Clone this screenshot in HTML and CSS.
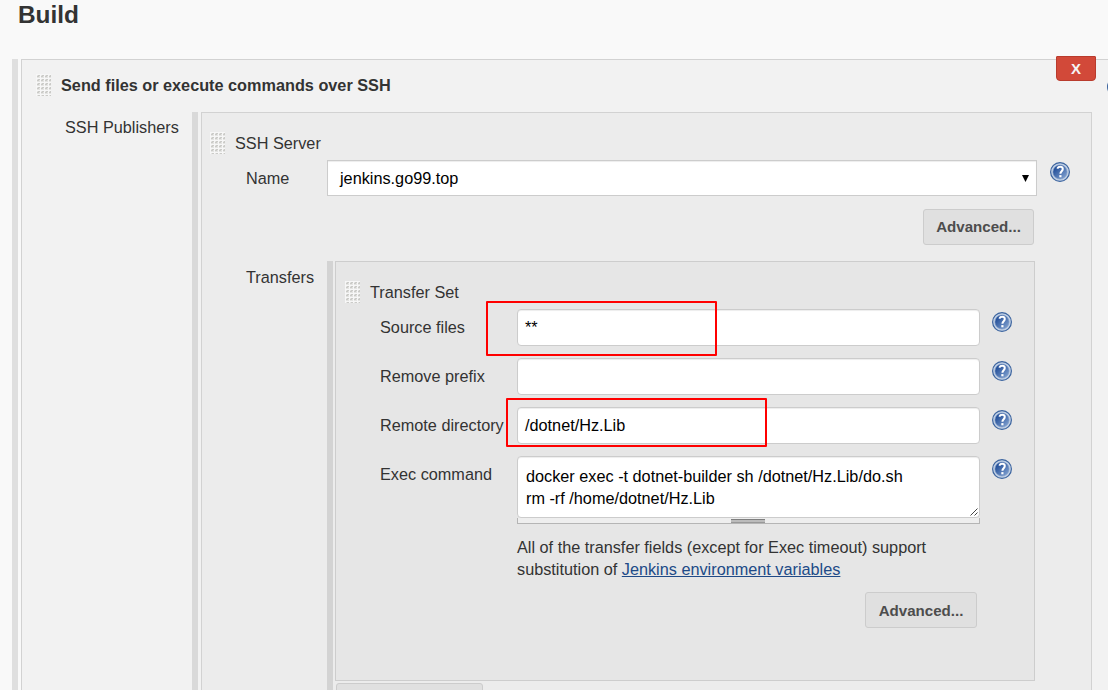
FILE: index.html
```html
<!DOCTYPE html>
<html lang="en">
<head>
<meta charset="utf-8">
<title>Build</title>
<link rel="stylesheet" href="styles.css">
</head>
<body>
<svg class="defs" aria-hidden="true">
  <defs>
    <linearGradient id="blue" x1="0" y1="0" x2="1" y2="1">
      <stop offset="0.2" stop-color="#24509a"/>
      <stop offset="0.9" stop-color="#7f9fce"/>
    </linearGradient>
    <symbol id="help" viewBox="0 0 20 20">
      <circle cx="10" cy="10" r="9.4" fill="#c3d2e6" stroke="#3c649f" stroke-width="1.2"/>
      <circle cx="10" cy="10" r="7.1" fill="url(#blue)" stroke="#7f9bc4" stroke-width=".6"/>
      <path d="M7.3 6.6C7.9 5.3 8.8 4.8 10.1 4.8c1.7 0 2.7.9 2.7 2.3 0 2-2.4 2.2-2.4 4.6" fill="none" stroke="#fff" stroke-width="2"/>
      <path d="M9.3 13.1h2.2v2.2H9.3z" fill="#fff"/>
    </symbol>
    <pattern id="dots" width="4" height="4" patternUnits="userSpaceOnUse">
      <path d="M0 0h4v4H0z" fill="#f7f7f7"/>
      <path d="M1 1h3v3H1z" fill="#e4e4e2"/>
      <path d="M2 1h2v1H2zM1 2h2v1H1z" fill="#cbcbc8"/>
    </pattern>
    <symbol id="handle" viewBox="0 0 15 22">
      <path d="M0 0h15v22H0z" fill="url(#dots)"/>
    </symbol>
  </defs>
</svg>
<main class="page">
  <h1 class="title">Build</h1>
  <div class="chunk chunk-build">
    <div class="bar"></div>
    <section class="panel panel-build">
      <button class="delete">X</button>
      <svg class="help help-edge"><use href="#help"/></svg>
      <header class="head"><svg class="handle"><use href="#handle"/></svg><strong>Send files or execute commands over SSH</strong></header>
      <div class="publishers">
        <div class="publishers-label">SSH Publishers</div>
        <div class="bar"></div>
        <section class="panel panel-server">
          <header class="head"><svg class="handle"><use href="#handle"/></svg><span>SSH Server</span></header>
          <div class="field server-field">
            <label class="label">Name</label>
            <div class="select"><span>jenkins.go99.top</span><svg class="arrow" viewBox="0 0 7 7"><path d="M0 0h7L3.5 7z"/></svg></div>
            <svg class="help"><use href="#help"/></svg>
          </div>
          <div class="actions server-actions"><button class="button">Advanced...</button></div>
          <div class="transfers">
            <div class="transfers-label">Transfers</div>
            <div class="bar"></div>
            <div class="transfer-list">
              <section class="panel panel-transfer">
                <header class="head"><svg class="handle"><use href="#handle"/></svg><span>Transfer Set</span></header>
                <div class="field"><label class="label">Source files</label><div class="input">**</div><svg class="help"><use href="#help"/></svg><i class="mark mark-source"></i></div>
                <div class="field"><label class="label">Remove prefix</label><div class="input"></div><svg class="help"><use href="#help"/></svg></div>
                <div class="field"><label class="label">Remote directory</label><div class="input">/dotnet/Hz.Lib</div><svg class="help"><use href="#help"/></svg><i class="mark mark-remote"></i></div>
                <div class="field">
                  <label class="label">Exec command</label>
                  <div class="command">
                    <div class="textarea">docker exec -t dotnet-builder sh /dotnet/Hz.Lib/do.sh<br>rm -rf /home/dotnet/Hz.Lib<svg class="resize" viewBox="0 0 8 8"><path d="M.5 7.5l7-7M4.5 7.5l3-3"/></svg></div>
                    <div class="grip"><span class="grip-thumb"></span></div>
                  </div>
                  <svg class="help"><use href="#help"/></svg>
                </div>
                <p class="note">All of the transfer fields (except for Exec timeout) support substitution of <a class="link" href="#">Jenkins environment variables</a></p>
                <div class="actions transfer-actions"><button class="button">Advanced...</button></div>
              </section>
              <button class="button add"></button>
            </div>
          </div>
        </section>
      </div>
    </section>
  </div>
</main>
</body>
</html>
```
FILE: styles.css
```css
* { box-sizing: border-box; }
body { margin: 0; background: #f9f9f9; color: #333; font: 16.25px/22px "Liberation Sans", Arial, sans-serif; }
svg { display: block; flex: none; }
.defs { position: absolute; width: 0; height: 0; }
.page { height: 690px; overflow: hidden; }
.title { margin: 0; padding-left: 18px; height: 59px; font-size: 24.4px; line-height: 29px; }

.chunk { display: flex; gap: 3px; padding-left: 12px; height: 660px; }
.bar { flex: none; width: 6px; background: #dfdfdf; }
.panel { border: 1px solid #d2d2d2; }
.panel-build { position: relative; flex: none; width: 1120px; background: #f2f2f2; padding-top: 14px; }
.head { display: flex; gap: 10px; height: 22px; }
.panel-build > .head { padding-left: 14px; }
.handle { width: 15px; height: 22px; }

.publishers { display: flex; margin-top: 16px; height: 620px; }
.publishers > .bar { background: #d9d9d9; }
.publishers-label { width: 170px; padding: 4px 0 0 43px; white-space: nowrap; }
.panel-server { width: 891px; margin-left: 3px; background: #ececec; padding-top: 19px; }
.panel-server > .head { padding-left: 8px; }

.field { position: relative; display: flex; align-items: flex-start; }
.label { flex: none; padding-top: 7px; white-space: nowrap; }
.server-field { margin-top: 6px; padding-left: 44px; }
.server-field .label { width: 81px; }
.server-field .help { margin: 2px 0 0 13px; }
.select { display: flex; align-items: center; justify-content: space-between; width: 710px; height: 36px; padding: 0 7px 0 12px; background: #fff; border: 1px solid #ccc; box-shadow: inset 0 1px 1px rgba(0,0,0,.075); color: #000; }
.arrow { width: 7px; height: 7px; }
.help { width: 20px; height: 20px; margin: 3px 0 0 12px; }

.actions { display: flex; justify-content: flex-end; }
.button { height: 36px; padding: 0 12px; background: #e0e0e0; border: 1px solid #ccc; border-radius: 3px; color: #4d4d4d; font: bold 15.1px "Liberation Sans", Arial, sans-serif; }
.server-actions { margin-top: 13px; padding-right: 57px; }
.server-actions .button { width: 111px; padding-bottom: 2px; }

.transfers { display: flex; margin-top: 16px; padding-left: 44px; height: 440px; }
.transfers > .bar { background: #d3d3d3; }
.transfers-label { width: 81px; padding-top: 5px; }
.transfer-list { margin-left: 2px; }
.panel-transfer { width: 700px; height: 420px; background: #e6e6e6; border-color: #cdcdcd; padding-top: 19px; }
.panel-transfer > .head { padding-left: 9px; }
.add { display: block; width: 147px; margin: 2px 0 0 1px; }

.panel-transfer .field { margin-bottom: 12px; padding-left: 44px; }
.panel-transfer .head + .field { margin-top: 6px; }
.panel-transfer .label { width: 137px; }
.input, .textarea { width: 463px; background: #fff; border: 1px solid #ccc; border-radius: 4px; box-shadow: inset 0 1px 1px rgba(0,0,0,.075); color: #000; }
.input { height: 37px; padding: 6px 7px; }
.textarea { position: relative; height: 62px; padding: 8px; }
.resize { position: absolute; right: 1px; bottom: 1px; width: 8px; height: 8px; fill: none; stroke: #444; stroke-width: 1; }
.grip { display: flex; justify-content: center; width: 463px; height: 6px; padding-right: 1px; background: #eee; border: solid #b5b5b5; border-width: 0 1px 1px; }
.grip-thumb { width: 34px; height: 4px; margin-top: 1px; background: #bbb; border-top: 1px solid #7f7f7f; border-bottom: 1px solid #999; }
.note { width: 440px; margin: 0 0 0 181px; }
.link { color: #204a87; }
.transfer-actions { margin-top: 12px; padding-right: 57px; }
.transfer-actions .button { width: 112px; }

.mark { position: absolute; border: 2px solid #f00; border-radius: 1px; }
.mark-source { left: 150px; top: -8px; width: 231px; height: 55px; }
.mark-remote { left: 170px; top: -9px; width: 261px; height: 49px; }
.delete { position: absolute; left: 1034px; top: -4px; width: 40px; height: 25px; padding: 0; background: #d24939; border: 1px solid #b93b2d; border-radius: 1px 1px 4px 4px; color: #f5f5f5; font: bold 15px "Liberation Sans", Arial, sans-serif; }
.help-edge { position: absolute; left: 1085px; top: 17px; margin: 0; }
```
